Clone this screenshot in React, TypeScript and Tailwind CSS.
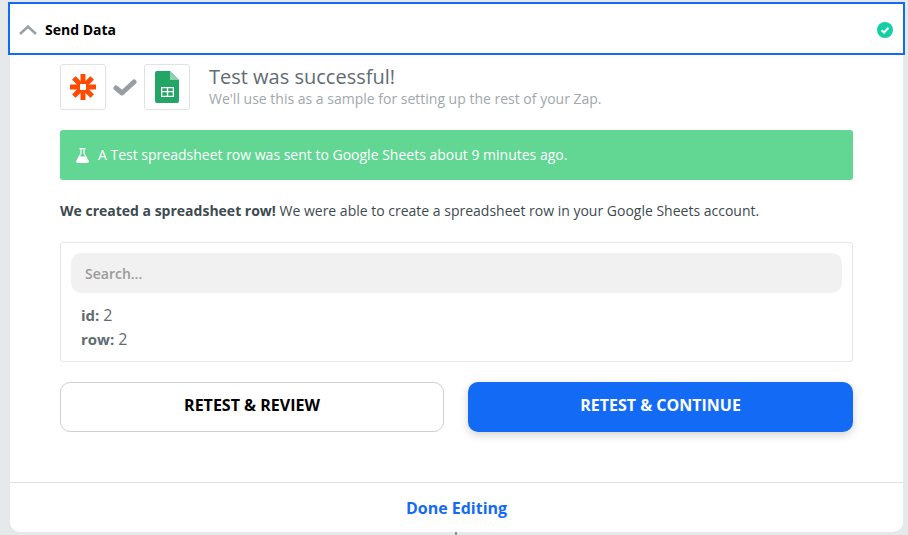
import React from "react";

function ZapierLogo() {
  return (
    <svg width="26" height="26" viewBox="0 0 26 26" fill="#ff4a00">
      <rect x="10.5" y="0" width="5" height="26" rx="0.5" />
      <rect x="0" y="10.5" width="26" height="5" rx="0.5" />
      <rect x="10.5" y="0" width="5" height="26" rx="0.5" transform="rotate(45 13 13)" />
      <rect x="10.5" y="0" width="5" height="26" rx="0.5" transform="rotate(-45 13 13)" />
      <rect x="10" y="10" width="6" height="6" fill="#ffffff" />
    </svg>
  );
}

function SheetsLogo() {
  return (
    <svg width="24" height="32" viewBox="0 0 24 32">
      <path d="M2 0H15L24 9V30a2 2 0 0 1-2 2H2a2 2 0 0 1-2-2V2a2 2 0 0 1 2-2Z" fill="#23a566" />
      <path d="M15 0L24 9H15Z" fill="#8ed1b1" />
      <path d="M6 16H19V26H6ZM7.3 17.3V20H11.8V17.3ZM13.2 17.3V20H17.7V17.3ZM7.3 21.3V24.7H11.8V21.3ZM13.2 21.3V24.7H17.7V21.3Z" fill="#ffffff" fillRule="evenodd" />
    </svg>
  );
}

export default function App() {
  return (
    <div className="h-[535px] w-[908px] overflow-hidden bg-[#e6e9ea] pt-[2px] pl-[10px] font-['Open_Sans',sans-serif]">
      <div className="flex h-[530px] w-[893px] flex-col rounded-b-[10px] bg-white">
        <div className="-mx-[2px] flex h-[53px] shrink-0 items-center border-2 border-[#136bf5] bg-white pt-[2px] pr-[10px] pl-[9px]">
          <svg width="18" height="10" viewBox="0 0 18 10" fill="none" stroke="#97a0a3" strokeWidth="2.4">
            <path d="M1 9L9 1.5L17 9" />
          </svg>
          <span className="ml-[8px] text-[14px] font-bold text-black">Send Data</span>
          <svg className="ml-auto" width="16" height="16" viewBox="0 0 16 16">
            <circle cx="8" cy="8" r="8" fill="#13cfa5" />
            <path d="M4.5 8.2L7 10.5L11.5 5.8" fill="none" stroke="#ffffff" strokeWidth="2" />
          </svg>
        </div>

        <div className="flex flex-1 flex-col px-[50px]">
          <div className="mt-[9px] flex h-[46px] items-center">
            <div className="flex h-[46px] w-[46px] items-center justify-center rounded-[3px] border border-[#e0e3e4]">
              <ZapierLogo />
            </div>
            <svg className="mx-[7px]" width="24" height="18" viewBox="0 0 24 18" fill="none" stroke="#979fa2" strokeWidth="5" strokeLinecap="round" strokeLinejoin="round">
              <path d="M3 10L9 15L21 4" />
            </svg>
            <div className="flex h-[46px] w-[46px] items-center justify-center rounded-[3px] border border-[#e0e3e4]">
              <SheetsLogo />
            </div>
            <div className="ml-[19px] flex flex-col pb-[2px]">
              <div className="text-[20px] leading-[26px] text-[#5f6c72]">Test was successful!</div>
              <div className="text-[14px] leading-[18px] text-[#a0a8ab]">We'll use this as a sample for setting up the rest of your Zap.</div>
            </div>
          </div>

          <div className="mt-[20px] flex h-[50px] items-center rounded-[3px] bg-[#62d693] pl-[16px] text-[14px] text-white">
            <svg width="13" height="15" viewBox="0 0 13 15" fill="#ffffff">
              <path d="M3.5 0H9.5V1.2H8.6V5.2L12.7 12.8C13.2 13.9 12.5 15 11.3 15H1.7C.5 15-.2 13.9.3 12.8L4.4 5.2V1.2H3.5ZM5.6 1.2V5.5L4 8.6H9L7.4 5.5V1.2Z" fillRule="evenodd" />
            </svg>
            <span className="ml-[9px] pb-[2px]">A Test spreadsheet row was sent to Google Sheets about 9 minutes ago.</span>
          </div>

          <p className="mt-[21px] text-[14px] leading-[20px] text-[#3d4a50]">
            <b>We created a spreadsheet row!</b> We were able to create a spreadsheet row in your Google Sheets account.
          </p>

          <div className="mt-[21px] h-[120px] rounded-[3px] border border-[#e4e6e7] px-[10px] pt-[10px]">
            <div className="flex h-[40px] items-center rounded-[10px] bg-[#f1f1f1] pl-[14px] text-[14px] font-semibold text-[#9a9a9a]">
              Search...
            </div>
            <div className="mt-[10px] pl-[10px] text-[15px] leading-[24px] text-[#5f6c72]">
              <div><b>id:</b> <span className="text-[16px]">2</span></div>
              <div><b>row:</b> <span className="text-[16px]">2</span></div>
            </div>
          </div>

          <div className="mt-[20px] flex gap-[24px]">
            <button className="flex h-[50px] w-[384px] items-center justify-center rounded-[10px] border border-[#cfcfcf] bg-white pb-[4px] text-[16px] font-bold text-black">
              RETEST &amp; REVIEW
            </button>
            <button className="flex h-[50px] w-[385px] items-center justify-center rounded-[10px] bg-[#136bf5] pb-[4px] text-[16px] font-bold text-white shadow-[0_3px_10px_rgba(0,0,0,0.18)]">
              RETEST &amp; CONTINUE
            </button>
          </div>
        </div>

        <div className="flex h-[50px] shrink-0 items-center justify-center border-t border-[#dfe1e2] text-[16px] font-bold text-[#136bf5]">
          Done Editing
        </div>
      </div>
      <div className="ml-[445px] h-[3px] w-[2px] bg-[#8a9396]"></div>
    </div>
  );
}
